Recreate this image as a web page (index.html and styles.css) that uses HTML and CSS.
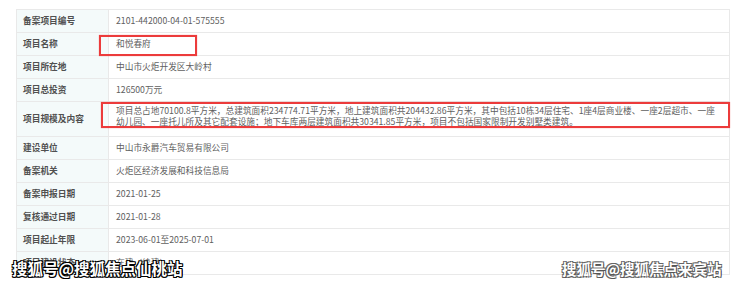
FILE: index.html
```html
<!DOCTYPE html>
<html lang="zh">
<head>
<meta charset="utf-8">
<link rel="stylesheet" href="styles.css">
</head>
<body>
<div class="page">
  <table class="info">
    <tr><th>备案项目编号</th><td>2101-442000-04-01-575555</td></tr>
    <tr><th>项目名称</th><td>和悦春府</td></tr>
    <tr><th>项目所在地</th><td>中山市火炬开发区大岭村</td></tr>
    <tr><th>项目总投资</th><td>126500万元</td></tr>
    <tr class="tall"><th>项目规模及内容</th><td>项目总占地70100.8平方米，总建筑面积234774.71平方米，地上建筑面积共204432.86平方米，其中包括10栋34层住宅、1座4层商业楼、一座2层超市、一座幼儿园、一座托儿所及其它配套设施；地下车库两层建筑面积共30341.85平方米，项目不包括国家限制开发别墅类建筑。</td></tr>
    <tr><th>建设单位</th><td>中山市永爵汽车贸易有限公司</td></tr>
    <tr><th>备案机关</th><td>火炬区经济发展和科技信息局</td></tr>
    <tr><th>备案申报日期</th><td>2021-01-25</td></tr>
    <tr><th>复核通过日期</th><td>2021-01-28</td></tr>
    <tr><th>项目起止年限</th><td>2023-06-01至2025-07-01</td></tr>
    <tr><th>项目建设状态</th><td>在建（续建）</td></tr>
  </table>
  <div class="mark mark-name"></div>
  <div class="mark mark-scale"></div>
  <div class="wm wm-left">搜狐号@搜狐焦点仙桃站</div>
  <div class="wm wm-right">搜狐号@搜狐焦点来宾站</div>
</div>
</body>
</html>
```
FILE: styles.css
```css
html, body {
  margin: 0;
  padding: 0;
  background: #fff;
  overflow: hidden;
}
.page {
  position: relative;
  width: 740px;
  height: 287px;
  padding: 9px 10px 0 16px;
  box-sizing: border-box;
  font-family: "Noto Sans CJK SC", "Liberation Sans", sans-serif;
}
.info {
  width: 714px;
  border-collapse: collapse;
  table-layout: fixed;
  font-size: 8.7px;
  color: #606060;
}
.info th,
.info td {
  border: 1px solid #e9e9e9;
  height: 23px;
  padding: 0 6px;
  box-sizing: border-box;
  line-height: 12px;
  vertical-align: middle;
}
.info th {
  width: 92px;
  background: #f4fafa;
  color: #505050;
  font-weight: bold;
  text-align: left;
}
.info td {
  padding-left: 7px;
  padding-right: 10px;
}
.info tr.tall th,
.info tr.tall td {
  height: 35px;
}
.info tr.tall td {
  vertical-align: top;
  padding-top: 3px;
  line-height: 11px;
}
.mark {
  position: absolute;
  border: 2px solid #ec3b3b;
  box-shadow: 0 0 1px rgba(236, 59, 59, 0.6);
}
.mark-name {
  left: 99px;
  top: 35px;
  width: 94px;
  height: 17px;
}
.mark-scale {
  left: 101px;
  top: 102px;
  width: 625px;
  height: 22px;
}
.wm {
  position: absolute;
  color: #fff;
  font-weight: bold;
  white-space: nowrap;
}
.wm-left {
  left: 12px;
  top: 257px;
  font-size: 15.5px;
  text-shadow: 1px 1px 0 #000, -1px -1px 0 #000, 1px -1px 0 #000, -1px 1px 0 #000, 0 1px 0 #000, 1px 0 0 #000;
}
.wm-right {
  left: 562px;
  top: 258px;
  font-size: 14.5px;
  text-shadow: 1px 1px 0 #555, -1px -1px 0 #666, 1px -1px 0 #666, -1px 1px 0 #666;
}
```
